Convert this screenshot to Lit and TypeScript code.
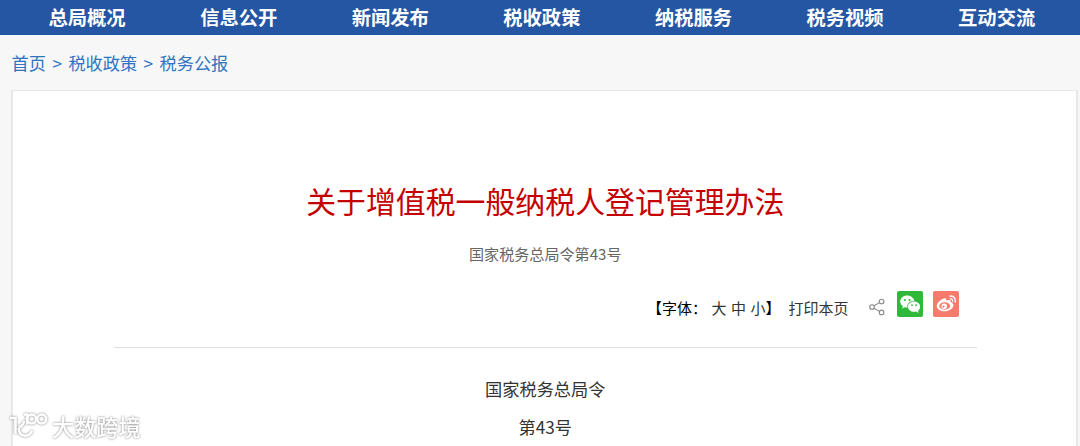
import { html, css, svg, LitElement } from 'lit';
import { customElement, property } from 'lit/decorators.js';

/**
 * Top navigation bar with the main sections of the site.
 *
 * @element tax-nav
 */
@customElement('tax-nav')
export class TaxNav extends LitElement {
  @property({ type: Array }) items: string[] = [];

  render() {
    return html`
      <nav class="nav">
        ${this.items.map((item) => html`<a class="item">${item}</a>`)}
      </nav>
    `;
  }

  static styles = css`
    :host {
      display: block;
      background: #2556a3;
    }

    .nav {
      display: grid;
      grid-template-columns: repeat(7, 151.6px);
      height: 35px;
      padding-left: 11.3px;
    }

    .item {
      color: #fff;
      font-size: 19.3px;
      font-weight: 700;
      line-height: 35px;
      text-align: center;
    }
  `;
}

/**
 * Breadcrumb trail.
 *
 * @element tax-breadcrumb
 */
@customElement('tax-breadcrumb')
export class TaxBreadcrumb extends LitElement {
  @property({ type: Array }) items: string[] = [];

  render() {
    return html`
      <div class="trail">
        ${this.items.map(
          (item, i) => html`
            ${i > 0 ? html`<span class="sep">&gt;</span>` : ''}
            <a>${item}</a>
          `,
        )}
      </div>
    `;
  }

  static styles = css`
    :host {
      display: block;
    }

    .trail {
      display: flex;
      height: 55px;
      padding-left: 11.6px;
      color: #2e74c0;
      font-size: 17.2px;
      line-height: 55px;
    }

    .sep {
      width: 22.4px;
      text-align: center;
    }
  `;
}

const shareIcon = svg`
  <svg class="share" viewBox="0 0 16 18" width="16" height="18">
    <g fill="none" stroke="#8a8a8a" stroke-width="1.1">
      <path d="M5 7.8 L10.4 4.6 M5 10.2 L10.4 13.4" />
      <circle cx="3" cy="9" r="2.3" />
      <circle cx="12.6" cy="3.5" r="2.3" />
      <circle cx="12.6" cy="14.4" r="2.3" />
    </g>
  </svg>
`;

const wechatIcon = svg`
  <svg viewBox="0 0 26 26" width="26" height="26">
    <rect width="26" height="26" rx="2" fill="#2fb83a" />
    <path
      fill="#fff"
      d="M10.2 4.6c-4 0-7 2.7-7 6 0 1.9 1 3.5 2.7 4.6l-.8 2.4 2.8-1.4c.9.3 1.6.3 2.6.3-.9-3.8 2.3-6.7 6.7-6.7-.7-3-3.6-5.2-7-5.2z"
    />
    <path
      fill="#fff"
      d="M17.1 10.6c-3.6 0-6.1 2.3-6.1 5.1s2.5 5.1 6.1 5.1c.7 0 1.4-.1 2.1-.3l2.4 1.4-.6-2.2c1.3-1 2.1-2.4 2.1-4 0-2.8-2.6-5.1-6-5.1z"
    />
    <g fill="#2fb83a">
      <circle cx="7.9" cy="9" r="1" />
      <circle cx="12.5" cy="9" r="1" />
      <circle cx="15" cy="14.2" r=".9" />
      <circle cx="19" cy="14.2" r=".9" />
    </g>
  </svg>
`;

const weiboIcon = svg`
  <svg viewBox="0 0 26 26" width="26" height="26">
    <rect width="26" height="26" rx="2" fill="#f67b6c" />
    <path
      fill="#fff"
      d="M10.8 7.5c1.6-.6 2.9 0 2.5 2 2.6-.9 5-.7 4.5 1.7 1.7.5 2.7 1.5 2.6 3.1-.3 3.5-4.3 6-8.8 6-4.3 0-7.8-2-7.8-5.3 0-2.9 3.4-6.3 7-7.5z"
    />
    <ellipse cx="11.7" cy="15" rx="5.5" ry="3.7" fill="#f67b6c" />
    <circle cx="11.2" cy="15.2" r="2.8" fill="#fff" />
    <circle cx="10.5" cy="15.7" r="1.1" fill="#f67b6c" />
    <g fill="none" stroke="#fff" stroke-linecap="round">
      <path stroke-width="1.5" d="M17 5.2c3.3-.6 6.1 2.2 5.2 5.7" />
      <path stroke-width="1.2" d="M17.4 7.9c1.5-.3 2.6.9 2.2 2.4" />
    </g>
  </svg>
`;

/**
 * Row of tools under the headline: font size, print and sharing.
 *
 * @element tax-toolbar
 */
@customElement('tax-toolbar')
export class TaxToolbar extends LitElement {
  render() {
    return html`
      <div class="toolbar">
        <span class="label">【字体：</span>
        <span class="sizes"><a>大</a><a>中</a><a>小</a></span>
        <span class="label">】</span>
        <a class="print">打印本页</a>
        ${shareIcon}
        <span class="icons">${wechatIcon}${weiboIcon}</span>
      </div>
    `;
  }

  static styles = css`
    :host {
      display: block;
    }

    .toolbar {
      display: flex;
      justify-content: flex-end;
      height: 37px;
      padding-right: 17.5px;
      color: #333;
      font-size: 15px;
      line-height: 36px;
    }

    .label {
      color: #000;
    }

    .sizes {
      display: flex;
      gap: 4.5px;
      margin-left: 4.5px;
    }

    .print {
      margin-left: 8px;
    }

    .share {
      margin: 8px 0 0 20px;
    }

    .icons {
      display: flex;
      gap: 10.5px;
      margin: 0.5px 0 0 12px;
    }
  `;
}

/**
 * Translucent site mark, white with a soft grey edge.
 *
 * @element site-mark
 */
@customElement('site-mark')
export class SiteMark extends LitElement {
  render() {
    return html`
      <div class="mark">
        <svg viewBox="0 0 42 32" width="42" height="32">
          <g fill="none" stroke="#fff" stroke-width="2.6">
            <path d="M0 8h5.5v16" />
            <path d="M14 11c-.5 3.5-2.5 5.5-5.5 6.5" />
            <path d="M8.5 18c.5 5.5 3 7.7 6.5 7.7s6-1.7 7-5.2" />
            <path d="M14 4.5h3v10" />
            <circle cx="21.7" cy="9" r="4.5" />
            <circle cx="31.7" cy="9" r="4.5" />
          </g>
        </svg>
        <span>大数跨境</span>
      </div>
    `;
  }

  static styles = css`
    .mark {
      display: flex;
      color: #fff;
      font-size: 22.2px;
      font-weight: 500;
      line-height: 32px;
      filter: drop-shadow(0 0 1.3px rgba(0, 0, 0, 0.5));
    }
  `;
}

@customElement('app-root')
export class AppRoot extends LitElement {
  private sections = [
    '总局概况',
    '信息公开',
    '新闻发布',
    '税收政策',
    '纳税服务',
    '税务视频',
    '互动交流',
  ];

  private trail = ['首页', '税收政策', '税务公报'];

  render() {
    return html`
      <tax-nav .items=${this.sections}></tax-nav>
      <tax-breadcrumb .items=${this.trail}></tax-breadcrumb>
      <main class="article">
        <h1 class="title">关于增值税一般纳税人登记管理办法</h1>
        <p class="subtitle">国家税务总局令第43号</p>
        <tax-toolbar></tax-toolbar>
        <div class="body">
          <p>国家税务总局令</p>
          <p>第43号</p>
        </div>
      </main>
      <site-mark class="watermark"></site-mark>
    `;
  }

  static styles = css`
    :host {
      display: block;
      position: relative;
      box-sizing: border-box;
      height: 446px;
      overflow: hidden;
      background: #f7f7f7;
      font-family: 'Noto Sans CJK SC', sans-serif;
    }

    .article {
      box-sizing: border-box;
      width: 1067px;
      height: 380px;
      margin-left: 11px;
      padding: 87px 99.5px 0 101px;
      border: 2px solid #e9e8e6;
      border-top-width: 1px;
      background: #fff;
    }

    .title {
      margin: 0;
      color: #c40000;
      font-size: 29.9px;
      font-weight: 400;
      line-height: 44px;
      text-align: center;
    }

    .subtitle {
      margin: 20px 0 26px;
      color: #666;
      font-size: 15.1px;
      line-height: 22px;
      text-align: center;
    }

    .body {
      margin-top: 20px;
      padding-top: 22px;
      border-top: 1px solid #dedede;
      color: #333;
      font-size: 17.2px;
      line-height: 38px;
      text-align: center;
    }

    .body p {
      margin: 0;
    }

    .watermark {
      position: absolute;
      left: 10px;
      top: 410px;
    }
  `;
}
